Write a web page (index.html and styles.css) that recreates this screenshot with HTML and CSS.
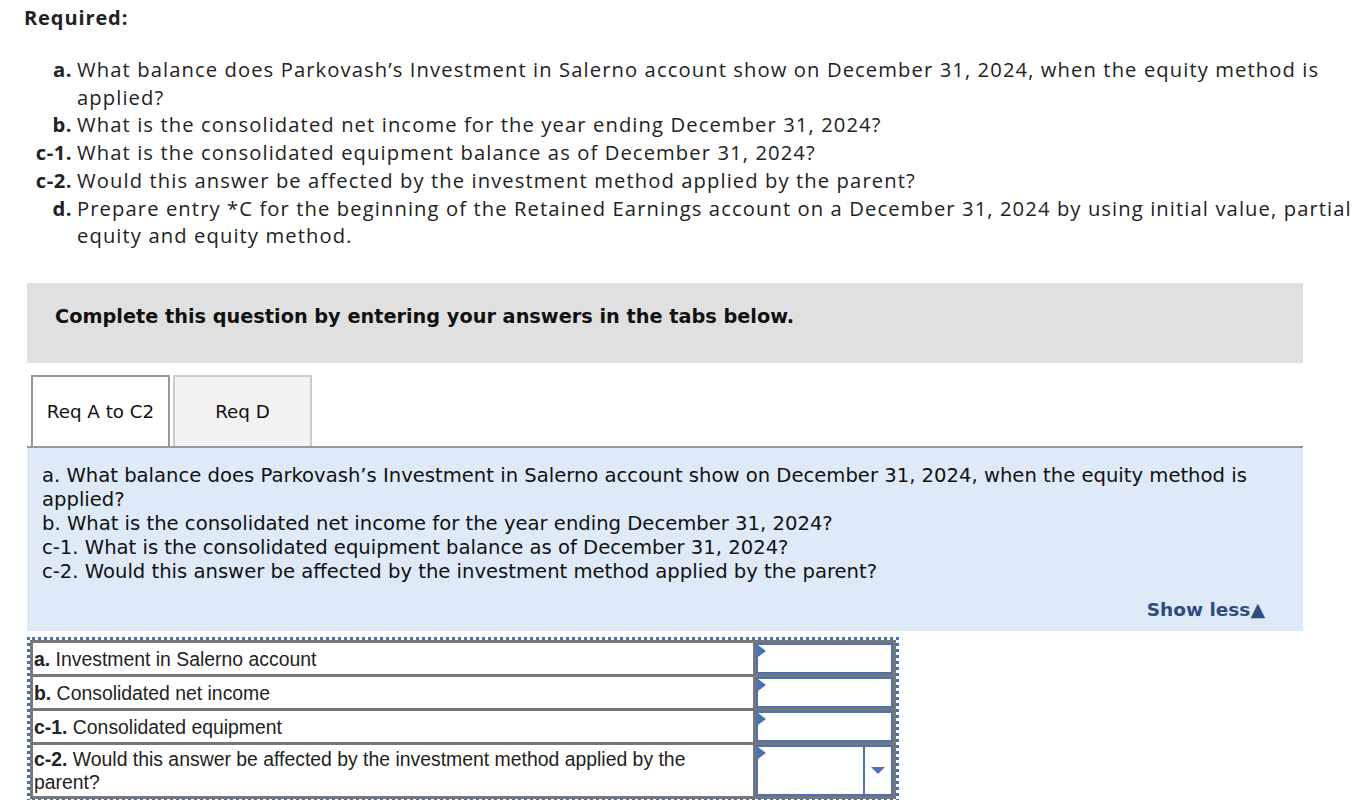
FILE: index.html
```html
<!DOCTYPE html>
<html>
<head>
<meta charset="utf-8">
<link rel="stylesheet" href="styles.css">
</head>
<body>
<div class="page">
  <h2 class="req-title">Required:</h2>
  <div class="req-list">
    <b class="lbl">a.</b><span class="txt">What balance does Parkovash’s Investment in Salerno account show on December 31, 2024, when the equity method is applied?</span>
    <b class="lbl">b.</b><span class="txt">What is the consolidated net income for the year ending December 31, 2024?</span>
    <b class="lbl">c-1.</b><span class="txt">What is the consolidated equipment balance as of December 31, 2024?</span>
    <b class="lbl">c-2.</b><span class="txt">Would this answer be affected by the investment method applied by the parent?</span>
    <b class="lbl">d.</b><span class="txt">Prepare entry *C for the beginning of the Retained Earnings account on a December 31, 2024 by using initial value, partial equity and equity method.</span>
  </div>

  <div class="instr">Complete this question by entering your answers in the tabs below.</div>

  <div class="tabs">
    <div class="tab active">Req A to C2</div>
    <div class="tab">Req D</div>
  </div>

  <div class="panel">
    <p class="panel-text">a. What balance does Parkovash’s Investment in Salerno account show on December 31, 2024, when the equity method is applied?<br>b. What is the consolidated net income for the year ending December 31, 2024?<br>c-1. What is the consolidated equipment balance as of December 31, 2024?<br>c-2. Would this answer be affected by the investment method applied by the parent?</p>
    <div class="show-less">Show less<span class="tri">▲</span></div>
  </div>

  <div class="answer-wrap">
    <table class="answer">
      <tr><td class="q"><b>a.</b> Investment in Salerno account</td><td class="a"><div class="inp"><span class="flag"></span></div></td></tr>
      <tr><td class="q"><b>b.</b> Consolidated net income</td><td class="a"><div class="inp"><span class="flag"></span></div></td></tr>
      <tr><td class="q"><b>c-1.</b> Consolidated equipment</td><td class="a"><div class="inp"><span class="flag"></span></div></td></tr>
      <tr class="tall"><td class="q"><b>c-2.</b> Would this answer be affected by the investment method applied by the parent?</td><td class="a"><div class="inp sel"><span class="flag"></span><span class="sel-main"></span><span class="sel-btn"><span class="down"></span></span></div></td></tr>
    </table>
  </div>
</div>
</body>
</html>
```

FILE: styles.css
```css
* { box-sizing: border-box; }
html, body { margin: 0; padding: 0; background: #fff; }
body { font-family: "Open Sans", "Liberation Sans", sans-serif; color: #222; }
.page { width: 1356px; height: 800px; overflow: hidden; }

.req-title {
  margin: 0;
  padding: 4px 0 0 24px;
  font-size: 20px;
  line-height: 28px;
  font-weight: 700;
  letter-spacing: 0.9px;
  color: #222;
}
.req-list {
  display: grid;
  grid-template-columns: 48px 1fr;
  column-gap: 5px;
  width: 1370px;
  padding: 24px 0 0 24px;
  font-size: 20.2px;
  line-height: 27.7px;
  letter-spacing: 1.1px;
  color: #222;
}
.req-list .lbl { text-align: right; font-weight: 700; letter-spacing: 0.5px; }
.req-list .txt { padding-right: 4px; }

.instr {
  margin: 33px 0 0 27px;
  width: 1276px;
  height: 80px;
  background: #e0e0e0;
  padding: 22px 0 0 28px;
  font-family: "DejaVu Sans", Verdana, sans-serif;
  font-weight: 700;
  font-size: 19.3px;
  line-height: 24px;
  color: #111;
}

.tabs {
  display: flex;
  gap: 3px;
  margin: 12px 0 0 27px;
  width: 1276px;
  padding-left: 4px;
  border-bottom: 2px solid #999;
  font-family: "DejaVu Sans", Verdana, sans-serif;
  font-size: 18.3px;
  color: #111;
}
.tab {
  width: 139px;
  height: 71px;
  display: flex;
  align-items: center;
  justify-content: center;
  border: 2px solid #ccc;
  border-bottom: none;
  background: #f2f2f2;
}
.tab.active {
  background: #fff;
  border-color: #999;
}

.panel {
  margin: 0 0 0 27px;
  width: 1276px;
  height: 183px;
  background: #deeaf7;
  padding: 16px 0 0 15px;
  font-family: "DejaVu Sans", Verdana, sans-serif;
  font-size: 19.6px;
  color: #111;
}
.panel-text {
  margin: 0;
  line-height: 24px;
}
.show-less {
  text-align: right;
  padding-right: 38px;
  margin-top: 13px;
  font-weight: 700;
  font-size: 18.5px;
  line-height: 24px;
  color: #2c4c84;
}
.show-less .tri { font-size: 19px; }

.answer-wrap {
  margin: 6px 0 0 27px;
  width: 872px;
  border: 3px dotted #4470b5;
}
.answer {
  border-collapse: collapse;
  width: 866px;
  font-family: "Liberation Sans", Arial, sans-serif;
  font-size: 19.4px;
  color: #222;
}
.answer td { border: 3px solid #777; padding: 0; }
.answer .q { width: 726px; height: 34px; padding: 1px 4px 0 1px; line-height: 22px; vertical-align: middle; }
.answer tr.tall .q { height: 54px; padding-right: 60px; line-height: 23px; }
.answer .a { width: 140px; height: 34px; }
.inp {
  position: relative;
  height: 100%;
  min-height: 30px;
  border: 2px solid #4a72b5;
  display: flex;
}
.answer tr.tall .inp { min-height: 50px; }
.flag {
  position: absolute;
  left: 0; top: 0;
  width: 0; height: 0;
  border-top: 6px solid transparent;
  border-bottom: 6px solid transparent;
  border-left: 8px solid #4a72b5;
}
.sel-main { flex: 1; }
.sel-btn {
  width: 28px;
  border-left: 2px solid #4a72b5;
  display: flex;
  align-items: center;
  justify-content: center;
}
.down {
  width: 0; height: 0;
  border-left: 7px solid transparent;
  border-right: 7px solid transparent;
  border-top: 7px solid #4a72b5;
}
```
